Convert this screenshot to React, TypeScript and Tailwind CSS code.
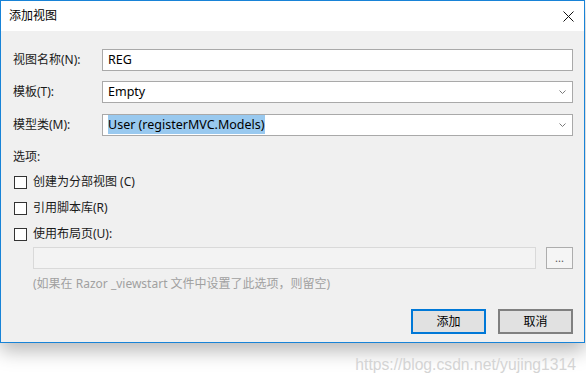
import React from "react";

const font = { fontFamily: '"Noto Sans", "Noto Sans CJK SC", sans-serif' };

const Chevron: React.FC = () => (
  <svg width="7" height="4" viewBox="0 0 7 4" className="shrink-0 mr-[1px]">
    <polyline points="0.5,0.5 3.5,3.5 6.5,0.5" fill="none" stroke="#7a7a7a" strokeWidth="1" />
  </svg>
);

const Field: React.FC<{ label: string; select?: boolean; children: React.ReactNode; className?: string }> = ({
  label,
  select,
  children,
  className,
}) => (
  <div className={"flex items-center h-[22px] " + (className ?? "")}>
    <div className="w-[89px] text-[12px] text-[#1a1a1a]">{label}</div>
    <div className="flex-1 h-[22px] flex items-center justify-between bg-white border border-[#a9a9a9] pl-[5px] pr-[5px] text-[12.5px] text-black">
      <div className="leading-[16px]">{children}</div>
      {select && <Chevron />}
    </div>
  </div>
);

const Check: React.FC<{ label: string }> = ({ label }) => (
  <div className="flex items-center h-[26px] pl-[1px]">
    <div className="w-[13px] h-[13px] border border-[#333] bg-white" />
    <span className="ml-[6px] text-[12px] text-[#1a1a1a]">{label}</span>
  </div>
);

const App: React.FC = () => {
  return (
    <div className="w-[586px] h-[382px] bg-white relative overflow-hidden" style={font}>
      {/* dialog window */}
      <div className="w-[585px] h-[343px] border border-[#1883d7] flex flex-col bg-white shadow-[0_8px_18px_rgba(0,0,0,0.28)]">
        {/* title bar */}
        <div className="h-[30px] flex items-center justify-between pl-[8px] pr-[8px] bg-white">
          <span className="text-[12px] text-black">添加视图</span>
          <svg width="11" height="11" viewBox="0 0 11 11" className="mr-[2px]">
            <path d="M0.5 0.5L10.5 10.5M10.5 0.5L0.5 10.5" stroke="#111" strokeWidth="1" />
          </svg>
        </div>

        {/* body */}
        <div className="flex-1 bg-[#f0f0f0] pl-[12px] pr-[11px] pt-[18px] flex flex-col">
          <Field label="视图名称(N):">REG</Field>
          <Field label="模板(T):" select className="mt-[10px]">
            Empty
          </Field>
          <Field label="模型类(M):" select className="mt-[11px]">
            <span className="bg-[#99c9ef] py-[1px]">User (registerMVC.Models)</span>
          </Field>

          <div className="mt-[13px] text-[12px] leading-[16px] text-[#1a1a1a]">选项:</div>
          <div className="mt-[4px] flex flex-col">
            <Check label="创建为分部视图 (C)" />
            <Check label="引用脚本库(R)" />
            <Check label="使用布局页(U):" />
          </div>

          <div className="flex items-center pl-[20px] h-[22px]">
            <div className="flex-1 h-[22px] bg-[#f3f3f3] border border-[#d9d9d9]" />
            <div className="ml-[10px] w-[27px] h-[22px] bg-[#f5f5f5] border border-[#adadad] flex items-center justify-center text-[11px] text-[#555] leading-none pb-[2px]">
              ...
            </div>
          </div>

          <div className="mt-[7px] pl-[20px] text-[12px] leading-[16px] text-[#a0a0a0]">
            (如果在 Razor _viewstart 文件中设置了此选项，则留空)
          </div>

          <div className="mt-[17px] flex justify-end gap-[12px]">
            <button className="w-[75px] h-[25px] bg-[#e1e1e1] border-2 border-[#0078d7] text-[12px] text-black">
              添加
            </button>
            <button className="w-[75px] h-[25px] bg-[#e1e1e1] border-2 border-[#808080] text-[12px] text-black">
              取消
            </button>
          </div>
        </div>
      </div>

      {/* watermark */}
      <div
        className="absolute right-[10px] top-[353px] text-[15.7px] text-[#d4d4d4]"
        style={{ fontFamily: '"Liberation Sans", Arial, sans-serif' }}
      >
        https://blog.csdn.net/yujing1314
      </div>
    </div>
  );
};

export default App;
